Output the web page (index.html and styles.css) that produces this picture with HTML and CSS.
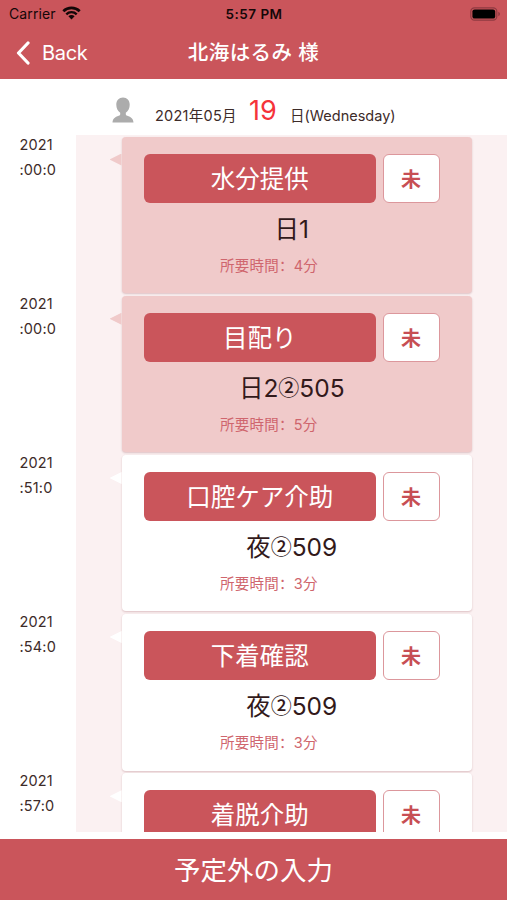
FILE: index.html
```html
<!DOCTYPE html>
<html lang="ja">

<head>
    <meta charset="UTF-8">
    <meta name="viewport" content="width=device-width, initial-scale=1.0">
    <title>北海はるみ 様</title>
    <link rel="stylesheet" href="styles.css">
</head>

<body>
    <div class="app">
        <header class="header">
            <div class="status-bar">
                <div class="carrier">
                    <span>Carrier</span>
                    <svg class="wifi" width="19" height="14" viewBox="0 0 19 14">
                        <path d="M1.3 5.2a11.7 11.7 0 0 1 16.4 0" fill="none" stroke="#140708" stroke-width="2.7" />
                        <path d="M4.3 8.3a7.4 7.4 0 0 1 10.4 0" fill="none" stroke="#140708" stroke-width="2.4" />
                        <path d="M6.4 10.3a4.4 4.4 0 0 1 6.2 0L9.5 13.5z" fill="#140708" />
                    </svg>
                </div>
                <div class="clock">5:57 PM</div>
                <svg class="battery" width="31" height="14" viewBox="0 0 31 14">
                    <rect x="0.8" y="0.8" width="26" height="12.4" rx="3.6" fill="none" stroke="#8f3a41" stroke-width="1.2" />
                    <rect x="2.4" y="2.4" width="22.8" height="9.2" rx="2.2" fill="#000" />
                    <path d="M28.3 4.8c2.2.8 2.2 3.6 0 4.4z" fill="#8f3a41" />
                </svg>
            </div>
            <div class="nav">
                <div class="back">
                    <svg width="14" height="24" viewBox="0 0 14 24">
                        <path d="M12 2L2.500 12L12 22" fill="none" stroke="#fff" stroke-width="3.2" stroke-linecap="round" stroke-linejoin="round" />
                    </svg>
                    <span>Back</span>
                </div>
                <h1>北海はるみ 様</h1>
            </div>
        </header>

        <div class="date">
            <svg class="user" width="22" height="26" viewBox="0 0 22 26">
                <path d="M11 .5c4 0 6.700 3 6.700 7.200 0 3.300-1.500 6.500-3.900 8.100v1.500c0 .8.500 1.200 1.500 1.500 3.800 1.200 6 3 6.200 6.700H.5c.2-3.700 2.400-5.500 6.200-6.700 1-.3 1.500-.7 1.500-1.500v-1.500C5.800 14.200 4.300 11 4.300 7.700 4.300 3.500 7 .5 11 .5z" fill="#acacac" />
            </svg>
            <span class="month">2021年05月</span>
            <span class="day">19</span>
            <span class="week">日(Wednesday)</span>
        </div>

        <main class="timeline">
            <div class="item">
                <div class="time">2021<br>:00:0</div>
                <div class="card done">
                    <div class="row">
                        <button class="task">水分提供</button>
                        <button class="state">未</button>
                    </div>
                    <p class="room">日1</p>
                    <p class="need">所要時間<span class="colon" lang="zh-CN">：</span>4分</p>
                </div>
            </div>
            <div class="item">
                <div class="time">2021<br>:00:0</div>
                <div class="card done">
                    <div class="row">
                        <button class="task">目配り</button>
                        <button class="state">未</button>
                    </div>
                    <p class="room">日2<span class="num">②</span>505</p>
                    <p class="need">所要時間<span class="colon" lang="zh-CN">：</span>5分</p>
                </div>
            </div>
            <div class="item">
                <div class="time">2021<br>:51:0</div>
                <div class="card">
                    <div class="row">
                        <button class="task">口腔ケア介助</button>
                        <button class="state">未</button>
                    </div>
                    <p class="room">夜<span class="num">②</span>509</p>
                    <p class="need">所要時間<span class="colon" lang="zh-CN">：</span>3分</p>
                </div>
            </div>
            <div class="item">
                <div class="time">2021<br>:54:0</div>
                <div class="card">
                    <div class="row">
                        <button class="task">下着確認</button>
                        <button class="state">未</button>
                    </div>
                    <p class="room">夜<span class="num">②</span>509</p>
                    <p class="need">所要時間<span class="colon" lang="zh-CN">：</span>3分</p>
                </div>
            </div>
            <div class="item">
                <div class="time">2021<br>:57:0</div>
                <div class="card">
                    <div class="row">
                        <button class="task">着脱介助</button>
                        <button class="state">未</button>
                    </div>
                </div>
            </div>
        </main>

        <button class="footer">予定外の入力</button>
    </div>
</body>

</html>
```

FILE: styles.css
```css
* {
    padding: 0;
    margin: 0;
    box-sizing: border-box;
}

body {
    background: #fff;
    font-family: Inter, "Noto Sans CJK JP", sans-serif;
    color: #3d2b29;
}

button {
    font-family: inherit;
    border: none;
    cursor: pointer;
}

.app {
    height: 900px;
    display: flex;
    flex-direction: column;
    overflow: hidden;
}

/* header */
.header {
    height: 79px;
    flex-shrink: 0;
    background: #ca555b;
}

.status-bar {
    height: 27px;
    padding: 0 6px 0 9px;
    display: grid;
    grid-template-columns: 1fr auto 1fr;
    align-items: center;
    color: #140708;
    font-size: 14px;
}

.carrier {
    display: flex;
    align-items: center;
    gap: 6px;
    letter-spacing: 0.1px;
}

.wifi {
    margin-top: -2px;
}

.clock {
    font-size: 13.5px;
    font-weight: 600;
    letter-spacing: 0.5px;
    margin-left: -2px;
}

.battery {
    justify-self: end;
}

.nav {
    height: 50px;
    padding: 0 16px;
    display: grid;
    grid-template-columns: 1fr auto 1fr;
    align-items: center;
    color: #fff;
}

.back {
    display: flex;
    align-items: center;
    gap: 12px;
    font-size: 20px;
    letter-spacing: -0.3px;
}

.nav h1 {
    font-size: 20.5px;
    line-height: 50px;
    font-weight: 500;
    letter-spacing: 0.4px;
    padding-top: 1px;
}

/* date */
.date {
    height: 56px;
    flex-shrink: 0;
    padding: 3px 0 0 112px;
    display: flex;
    align-items: baseline;
    font-size: 14.5px;
    line-height: 68px;
}

.user {
    margin: 0 21px -2px 0;
    align-self: center;
}

.month {
    width: 94px;
    letter-spacing: 0.25px;
}

.day {
    width: 41px;
    color: #f5333a;
    font-size: 27px;
    line-height: 52px;
    transform: translateY(-1px);
}

/* list */
.timeline {
    height: 697px;
    flex-shrink: 0;
    overflow: hidden;
    background: linear-gradient(to right, #fff 76px, #fbf1f2 76px);
}

.item {
    height: 159.2px;
    display: flex;
}

.time {
    width: 121.5px;
    padding: 0 0 0 19.5px;
    font-size: 14.5px;
    letter-spacing: 0.15px;
    line-height: 25px;
    margin-top: -3.5px;
}

.card {
    position: relative;
    width: 350px;
    height: 156.5px;
    margin-top: 1.5px;
    padding: 17px 32px 0 22.5px;
    background: #fff;
    border-radius: 4px;
    box-shadow: 0 1px 2px rgba(150, 80, 85, 0.3);
}

.card::before {
    content: "";
    position: absolute;
    left: -12px;
    top: 17px;
    width: 12px;
    height: 12px;
    background: #fff;
    clip-path: polygon(0 50%, 100% 0, 100% 100%);
}

.card.done,
.card.done::before {
    background: #f0caca;
}

.row {
    display: flex;
    gap: 7px;
}

.task {
    width: 232px;
    height: 49px;
    border-radius: 6px;
    background: #ca555b;
    color: #fff;
    font-size: 24.5px;
    line-height: 50px;
}

.state {
    width: 57px;
    height: 49px;
    border: 1.5px solid #dc979c;
    border-radius: 6px;
    background: #fff;
    color: #c74e54;
    font-size: 20px;
    font-weight: 700;
}

.room {
    color: #32191a;
    font-size: 24.5px;
    line-height: 36px;
    margin-top: 8px;
    text-align: center;
}

.num {
    font-family: "Noto Sans CJK JP", sans-serif;
    font-size: 21px;
    font-weight: 500;
    line-height: 1;
    vertical-align: 2px;
}

.need {
    color: #cf656d;
    font-size: 14.5px;
    line-height: 22px;
    margin-top: 7px;
    padding-left: 76px;
    letter-spacing: 0.25px;
}

.colon {
    font-family: "Noto Sans CJK SC", sans-serif;
}

/* footer */
.footer {
    height: 61px;
    flex-shrink: 0;
    margin-top: auto;
    padding-bottom: 2px;
    background: #ca555b;
    color: #fff;
    font-size: 26.5px;
}
```
